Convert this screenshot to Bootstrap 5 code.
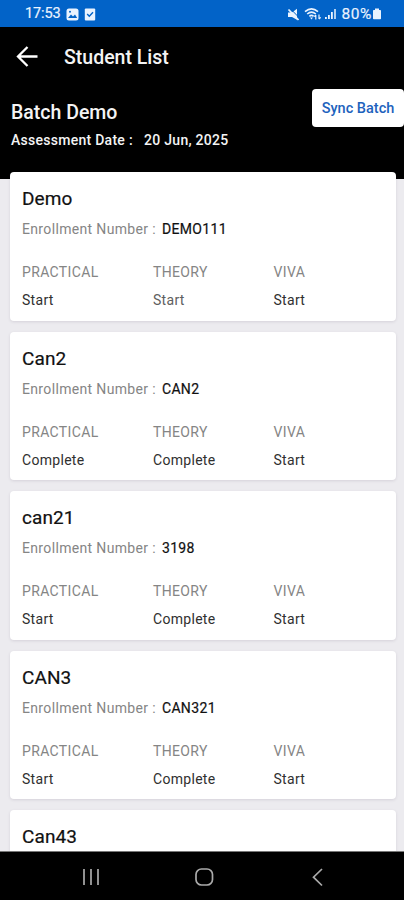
<!DOCTYPE html>
<html lang="en">
<head>
<meta charset="utf-8">
<meta name="viewport" content="width=device-width, initial-scale=1">
<title>Student List</title>
<link href="https://cdn.jsdelivr.net/npm/bootstrap@5.3.0/dist/css/bootstrap.min.css" rel="stylesheet">
<style>
html,body{height:100%}
body{font-family:Roboto,"Liberation Sans",sans-serif;background:#ecebef;color:#111;width:404px;height:900px;overflow:hidden;line-height:1}
.statusbar{height:27px;background:#0263c8;color:#eaf3ff;font-size:14.5px;padding:1px 22px 0 25px}
.clock{letter-spacing:-.1px;margin-right:5px;-webkit-text-stroke:.2px;padding-top:1px}
.percent{margin-left:4px;letter-spacing:.6px;font-size:15.5px;padding-top:1px;-webkit-text-stroke:.15px}
.check-icon{margin-left:5px}
.wifi-icon{margin-left:4px}
.signal-icon{margin-left:3px}
.hero{height:152px;background:#000;color:#f4f4f4}
.topbar{height:60px;padding:0 16px}
.topbar h1{font-size:19.5px;font-weight:500;margin:2px 0 0 25px;line-height:1}
.batch{padding:2px 0 0 11px}
.batch-name{font-size:19.5px;font-weight:500;margin:14px 0 10px;line-height:1}
.batch-date{font-size:14px;font-weight:500;white-space:pre;letter-spacing:.27px}
.sync{width:92px;height:38px;background:#fff;color:#1d62bd;font-size:14.5px;font-weight:500;border-radius:4px;padding:2px 0 0;border:0;white-space:nowrap}
.sync:hover{background:#f2f6fc;color:#1d62bd}
.roster{margin-top:-7px;padding:0 8px 0 10px;gap:11px;height:679px;overflow:hidden}
.student{height:148.6px;border:0;border-radius:4px;padding:17px 12px 0;flex:none;box-shadow:0 1px 3px rgba(60,50,80,.13)}
.student h2{font-size:19px;font-weight:400;margin:0 0 13px;line-height:19px;letter-spacing:.1px;-webkit-text-stroke:.2px}
.enroll{font-size:14px;line-height:16px;color:#858585;letter-spacing:.34px}
.enroll b{font-weight:400;color:#111;-webkit-text-stroke:.2px;margin-left:6px;letter-spacing:.35px}
.stages{display:grid;grid-template-columns:131px 120.5px 1fr;margin-top:27px;font-size:14px;line-height:16px}
.stages dt{font-weight:400;color:#858585;margin-bottom:12px;letter-spacing:.35px}
.stages dd{margin:0;color:#303030;letter-spacing:.3px}
.stages .muted{color:#606060}
.sysnav{height:49px;background:#000;border-top:1px solid #777}
.sysnav svg{display:block;margin-top:2px}
</style>
</head>
<body class="d-flex flex-column">
<header class="statusbar d-flex align-items-center flex-shrink-0">
  <span class="clock">17:53</span>
  <svg width="13" height="13" viewBox="0 0 13 13"><rect x=".5" y=".5" width="12" height="12" rx="2.5" fill="#eaf3ff"/><path d="M2 10 5 6.5l2 2L9 6.5l2.2 3.5z" fill="#0263c8"/><circle cx="4" cy="3.8" r="1" fill="#0263c8"/></svg>
  <svg class="check-icon" width="12" height="13" viewBox="0 0 12 13"><rect x=".8" y=".5" width="10.4" height="12" rx="1" fill="#eaf3ff"/><path d="m3.2 6 2.1 2.2L9 4.2" fill="none" stroke="#0263c8" stroke-width="1.4"/></svg>
  <svg class="ms-auto" width="13" height="13" viewBox="0 0 13 13" fill="#eaf3ff"><path d="M1 4.500h4L10 .8v11L5 9H1z"/><path d="M3.500 .8 13 10.500" stroke="#0263c8" stroke-width="1"/><path d="M1.500 1.500 11.500 12" stroke="#eaf3ff" stroke-width="1.800"/></svg>
  <svg class="wifi-icon" width="18" height="14" viewBox="0 0 18 14" fill="none" stroke="#eaf3ff" stroke-width="1.6"><path d="M1 4.600Q7.500-1 14 4.600M3.200 7Q7.500 3.200 11.800 7M5.400 9.300Q7.500 7.500 9.600 9.300"/><path d="m6 10.500 1.500 2 1.500-2z" fill="#eaf3ff" stroke="none"/><path d="M11.800 12.500V8m-1.500 1.700L11.800 8M15 7.500V12m1.700-1.700L15 12" stroke-width="1.200"/></svg>
  <svg class="signal-icon" width="12" height="12" viewBox="0 0 12 12" fill="#eaf3ff"><path d="M0 9h1.800v2H0zM3 7h1.800v4H3zM6 4h1.800v7H6z"/><path d="M9 1h2v10H9z" opacity=".75"/></svg>
  <span class="percent">80%</span>
  <svg width="10" height="12" viewBox="0 0 10 12" fill="#eaf3ff"><path d="M3 .5h4V2h1.200q.8 0 .8.800v7.700q0 .8-.8.800H1.800q-.8 0-.8-.8V2.800q0-.8.800-.8H3z"/></svg>
</header>
<section class="hero flex-shrink-0">
  <div class="topbar d-flex align-items-center">
    <svg width="23" height="22" viewBox="0 0 23 22" fill="none" stroke="#fff" stroke-width="2.300"><path d="M21.500 10.500H2.500M11.500 1 2 10.500l9.500 9.500"/></svg>
    <h1>Student List</h1>
  </div>
  <div class="batch d-flex justify-content-between align-items-start">
    <div>
      <h2 class="batch-name">Batch Demo</h2>
      <div class="batch-date">Assessment Date :   20 Jun, 2025</div>
    </div>
    <button class="btn sync" type="button">Sync Batch</button>
  </div>
</section>
<main class="roster d-flex flex-column flex-shrink-0">
  <article class="card student"><h2>Demo</h2><div class="enroll">Enrollment Number :<b>DEMO111</b></div>
    <dl class="stages mb-0"><div><dt>PRACTICAL</dt><dd>Start</dd></div><div><dt>THEORY</dt><dd class="muted">Start</dd></div><div><dt>VIVA</dt><dd>Start</dd></div></dl></article>
  <article class="card student"><h2>Can2</h2><div class="enroll">Enrollment Number :<b>CAN2</b></div>
    <dl class="stages mb-0"><div><dt>PRACTICAL</dt><dd>Complete</dd></div><div><dt>THEORY</dt><dd>Complete</dd></div><div><dt>VIVA</dt><dd>Start</dd></div></dl></article>
  <article class="card student"><h2>can21</h2><div class="enroll">Enrollment Number :<b>3198</b></div>
    <dl class="stages mb-0"><div><dt>PRACTICAL</dt><dd>Start</dd></div><div><dt>THEORY</dt><dd>Complete</dd></div><div><dt>VIVA</dt><dd>Start</dd></div></dl></article>
  <article class="card student"><h2>CAN3</h2><div class="enroll">Enrollment Number :<b>CAN321</b></div>
    <dl class="stages mb-0"><div><dt>PRACTICAL</dt><dd>Start</dd></div><div><dt>THEORY</dt><dd>Complete</dd></div><div><dt>VIVA</dt><dd>Start</dd></div></dl></article>
  <article class="card student"><h2>Can43</h2></article>
</main>
<nav class="sysnav d-flex align-items-center flex-shrink-0 justify-content-center" aria-label="System">
  <svg width="250" height="20" viewBox="0 0 250 20" fill="none" stroke="#aaa" stroke-width="1.700"><path d="M7 2v16M14 2v16M21 2v16"/><rect x="119" y="2" width="16.500" height="16" rx="5.500"/><path d="m245 2-8.500 8.200 8.500 8.300"/></svg>
</nav>
<script src="https://cdn.jsdelivr.net/npm/bootstrap@5.3.0/dist/js/bootstrap.bundle.min.js"></script>
</body>
</html>
